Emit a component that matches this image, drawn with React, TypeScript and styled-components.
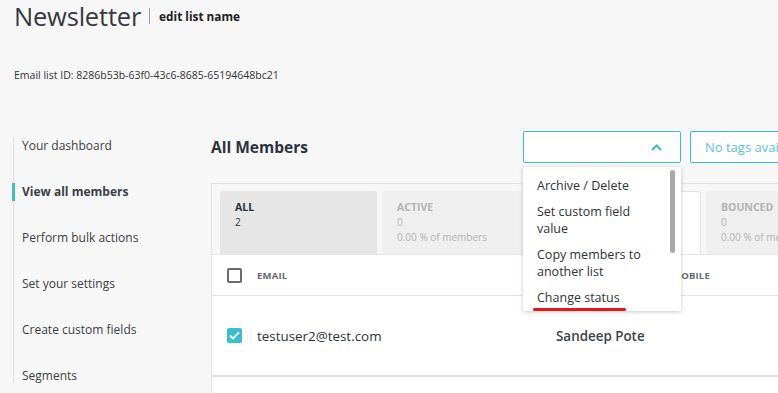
import React from "react";
import styled, { createGlobalStyle } from "styled-components";

const Global = createGlobalStyle`
  html, body { margin: 0; padding: 0; }
  body {
    background: #f7f7f7;
    font-family: "Open Sans", "Noto Sans", sans-serif;
    color: #333;
    overflow: hidden;
    width: 778px;
    height: 393px;
  }
`;

const TEAL = "#3bbccf";

const Page = styled.div`
  width: 778px;
  height: 393px;
  overflow: hidden;
`;

const Header = styled.header`
  padding: 0 14px;
`;

const TitleRow = styled.div`
  display: flex;
  align-items: center;
  height: 32px;
`;

const Title = styled.h1`
  margin: 0;
  font-size: 25.5px;
  font-weight: 400;
  line-height: 32px;
  color: #363a3f;
  letter-spacing: -0.2px;
`;

const Separator = styled.span`
  width: 1px;
  height: 16px;
  background: #9a9a9a;
  margin: 0 9px 0 8px;
`;

const EditName = styled.span`
  font-size: 11.8px;
  font-weight: 700;
  color: #222;
`;

const IdLine = styled.div`
  margin-top: 35px;
  font-size: 10.5px;
  line-height: 16px;
  color: #333;
`;

const Body = styled.div`
  display: flex;
  margin-top: 48px;
`;

const Sidebar = styled.nav`
  flex-shrink: 0;
  margin-left: 13px;
  margin-top: 6px;
  width: 197px;
  height: 246px;
  border-left: 1px solid #dcdcdc;
  display: flex;
  flex-direction: column;
  gap: 28px;
`;

const NavItem = styled.div<{ $active?: boolean }>`
  font-size: 12px;
  line-height: 18px;
  color: #3b3f44;
  font-weight: ${(p) => (p.$active ? 700 : 400)};
  padding-left: ${(p) => (p.$active ? "7px" : "8px")};
  margin-left: ${(p) => (p.$active ? "-2px" : "0")};
  border-left: ${(p) => (p.$active ? `3px solid ${TEAL}` : "0")};
  white-space: nowrap;
`;

const Main = styled.main`
  width: 639px;
  flex-shrink: 0;
  position: relative;
`;

const TopRow = styled.div`
  display: flex;
  align-items: center;
  height: 32px;
  gap: 9px;
`;

const SectionTitle = styled.h2`
  flex: 1;
  margin: 0;
  font-size: 15.5px;
  font-weight: 700;
  color: #2c3440;
`;

const Select = styled.div`
  box-sizing: border-box;
  width: 158px;
  height: 32px;
  background: #fff;
  border: 1px solid ${TEAL};
  border-radius: 2px;
  display: flex;
  align-items: center;
  justify-content: flex-end;
  padding-right: 18px;
`;

const Tags = styled.div`
  box-sizing: border-box;
  width: 160px;
  height: 32px;
  background: #fff;
  border: 1px solid ${TEAL};
  border-radius: 2px;
  display: flex;
  align-items: center;
  padding-left: 14px;
  font-size: 13px;
  color: #5ec3d3;
  white-space: nowrap;
  overflow: hidden;
`;

const Menu = styled.div`
  position: absolute;
  left: 312px;
  top: 36px;
  width: 158px;
  height: 144px;
  background: #fff;
  box-shadow: 0 1px 4px rgba(0, 0, 0, 0.22);
  box-sizing: border-box;
  padding: 10px 24px 0 14px;
  display: flex;
  flex-direction: column;
  gap: 9px;
  z-index: 5;
`;

const MenuItem = styled.div`
  font-size: 12.5px;
  line-height: 17px;
  color: #2f3338;
`;

const ScrollThumb = styled.div`
  position: absolute;
  right: 6px;
  top: 3px;
  width: 5px;
  height: 83px;
  border-radius: 3px;
  background: #a9a9a9;
`;

const RedMark = styled.div`
  position: absolute;
  left: 10px;
  top: 141px;
  width: 93px;
  height: 3px;
  border-radius: 2px;
  background: #e3171c;
`;

const Card = styled.section`
  margin-top: 20px;
  border: 1px solid #e2e2e2;
  border-right: 0;
  width: 700px;
`;

const TabStrip = styled.div`
  display: flex;
  gap: 5px;
  padding: 7px 0 0 8px;
  background: #f7f7f7;
  border-bottom: 1px solid #e6e6e6;
`;

const Tab = styled.div<{ $bg: string; $strong?: boolean; $bordered?: boolean }>`
  box-sizing: border-box;
  width: 157px;
  height: 63px;
  flex-shrink: 0;
  background: ${(p) => p.$bg};
  border-radius: 3px 3px 0 0;
  border: ${(p) => (p.$bordered ? "1px solid #e2e2e2" : "0")};
  border-bottom: 0;
  padding: 9px 15px 0;
  font-size: 10px;
  line-height: 15px;
  color: ${(p) => (p.$strong ? "#2a323c" : "#b3b3b3")};
  white-space: nowrap;
`;

const TabLabel = styled.div`
  font-weight: 700;
  font-size: 10.5px;
`;

const Table = styled.div`
  background: #fff;
`;

const Row = styled.div<{ $h: number; $border: string }>`
  display: grid;
  grid-template-columns: 15px 284px 101px 1fr;
  column-gap: 15px;
  align-items: center;
  height: ${(p) => p.$h}px;
  padding-left: 15px;
  border-bottom: ${(p) => p.$border};
`;

const HeadCell = styled.div`
  font-size: 9.5px;
  font-weight: 700;
  color: #666a70;
  letter-spacing: 0.2px;
`;

const Cell = styled.div<{ $bold?: boolean }>`
  font-size: 13.4px;
  color: ${(p) => (p.$bold ? "#3d4248" : "#2f3338")};
  font-weight: ${(p) => (p.$bold ? 600 : 400)};
  white-space: nowrap;
`;

const Box = styled.div<{ $checked?: boolean }>`
  box-sizing: border-box;
  width: 15px;
  height: 15px;
  border-radius: 2px;
  border: ${(p) => (p.$checked ? "0" : "2px solid #6b6b6b")};
  background: ${(p) => (p.$checked ? TEAL : "#fff")};
  display: flex;
  align-items: center;
  justify-content: center;
`;

const Spacer = styled.div`
  height: 30px;
  background: #fff;
`;

export default function App() {
  return (
    <Page>
      <Global />
      <Header>
        <TitleRow>
          <Title>Newsletter</Title>
          <Separator />
          <EditName>edit list name</EditName>
        </TitleRow>
        <IdLine>Email list ID: 8286b53b-63f0-43c6-8685-65194648bc21</IdLine>
      </Header>
      <Body>
        <Sidebar>
          <NavItem>Your dashboard</NavItem>
          <NavItem $active>View all members</NavItem>
          <NavItem>Perform bulk actions</NavItem>
          <NavItem>Set your settings</NavItem>
          <NavItem>Create custom fields</NavItem>
          <NavItem>Segments</NavItem>
        </Sidebar>
        <Main>
          <TopRow>
            <SectionTitle>All Members</SectionTitle>
            <Select>
              <svg width="11" height="7" viewBox="0 0 11 7">
                <path d="M1 6 L5.5 1.5 L10 6" fill="none" stroke={TEAL} strokeWidth="2" />
              </svg>
            </Select>
            <Tags>No tags available</Tags>
          </TopRow>
          <Menu>
            <MenuItem>Archive / Delete</MenuItem>
            <MenuItem>Set custom field value</MenuItem>
            <MenuItem>Copy members to another list</MenuItem>
            <MenuItem>Change status</MenuItem>
            <ScrollThumb />
            <RedMark />
          </Menu>
          <Card>
            <TabStrip>
              <Tab $bg="#e6e6e6" $strong>
                <TabLabel>ALL</TabLabel>
                <div>2</div>
              </Tab>
              <Tab $bg="#efefef">
                <TabLabel>ACTIVE</TabLabel>
                <div>0</div>
                <div>0.00 % of members</div>
              </Tab>
              <Tab $bg="#ffffff" $bordered />
              <Tab $bg="#efefef">
                <TabLabel>BOUNCED</TabLabel>
                <div>0</div>
                <div>0.00 % of members</div>
              </Tab>
            </TabStrip>
            <Table>
              <Row $h={40} $border="1px solid #e3e3e3">
                <Box />
                <HeadCell>EMAIL</HeadCell>
                <HeadCell />
                <HeadCell>MOBILE</HeadCell>
              </Row>
              <Row $h={79} $border="2px solid #e0e0e0">
                <Box $checked>
                  <svg width="11" height="9" viewBox="0 0 11 9">
                    <path d="M1 4.5 L4 7.5 L10 1.2" fill="none" stroke="#fff" strokeWidth="1.8" />
                  </svg>
                </Box>
                <Cell>testuser2@test.com</Cell>
                <Cell $bold>Sandeep Pote</Cell>
                <Cell />
              </Row>
              <Spacer />
            </Table>
          </Card>
        </Main>
      </Body>
    </Page>
  );
}
